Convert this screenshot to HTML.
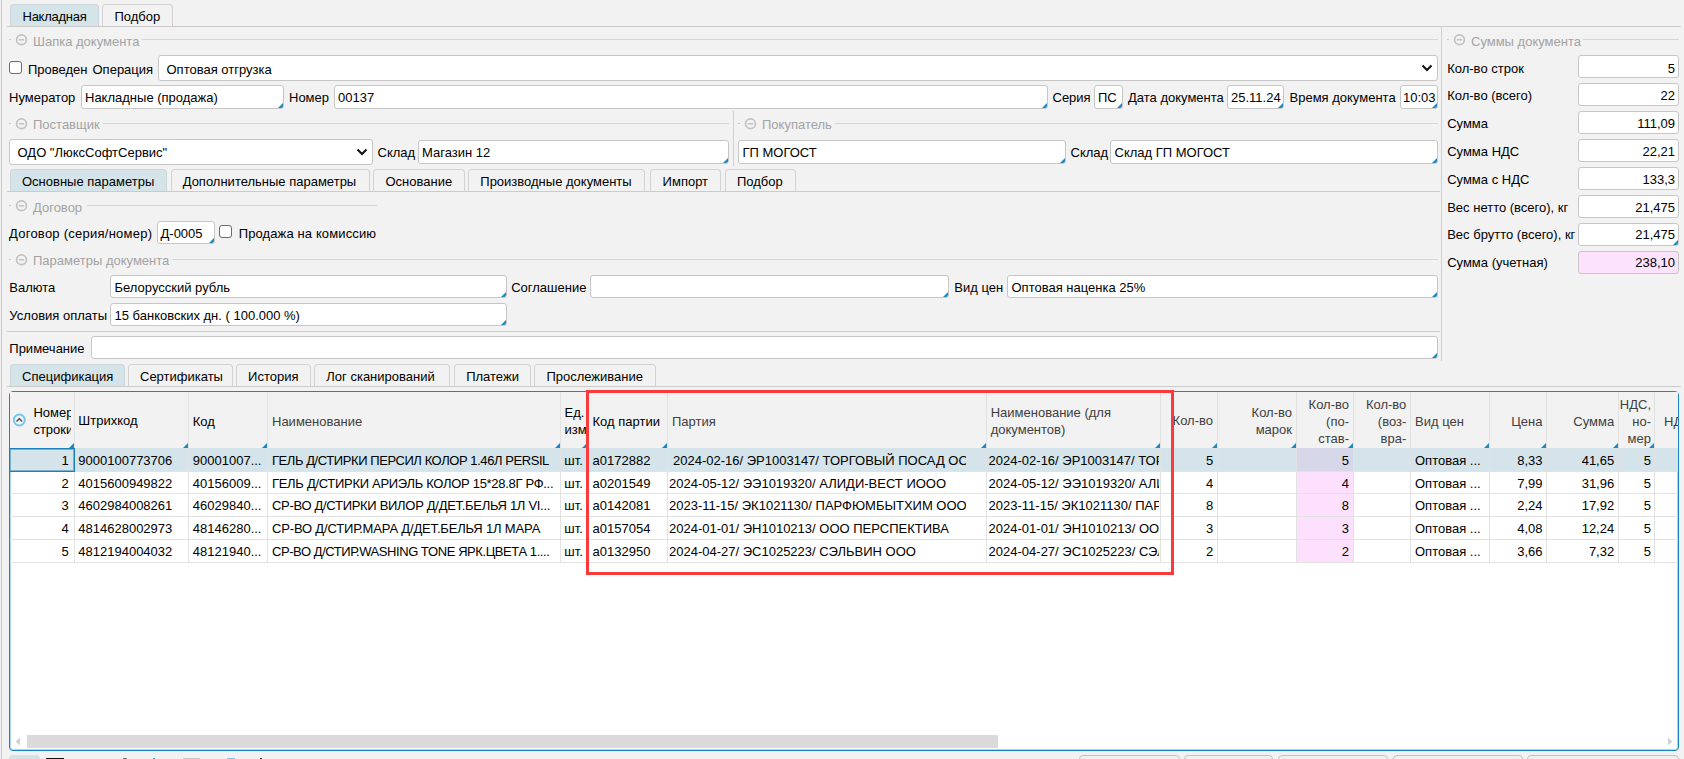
<!DOCTYPE html><html><head><meta charset="utf-8"><style>
html,body{margin:0;padding:0}
body{width:1684px;height:759px;overflow:hidden;background:#f2f2f2;position:relative;font-family:"Liberation Sans",sans-serif;font-size:13px;color:#000}
.t{position:absolute;white-space:nowrap;line-height:16px;font-size:13px}
.r{text-align:right}
.sec{color:#a3a3a3}
.ab{position:absolute}
.inp{position:absolute;box-sizing:border-box;background:#fff;border:1px solid #c6c6c6;border-radius:3px}
.cr{position:absolute;width:0;height:0;border-style:solid;border-width:0 0 5px 5px;border-color:transparent transparent #1e88c0 transparent}
.tab{position:absolute;box-sizing:border-box;background:#f2f2f2;border:1px solid #d2d2d2;border-bottom:none;border-radius:4px 4px 0 0}
.tab.act{background:#d4e4e9;border-color:#cdd6da}
.cb{position:absolute;width:13px;height:13px;box-sizing:border-box;border:1px solid #6a6a6a;border-radius:3px;background:#fff}
.hc{position:absolute;background:#f2f2f2;top:392px;height:56px}
.hdr{color:#404040}
.tri{position:absolute;width:0;height:0;border-style:solid;border-width:0 0 5px 5px;border-color:transparent transparent #1e88c0 transparent}
</style></head><body>

<div class="ab" style="left:1px;top:0px;width:1px;height:759px;background:#c8c8c8"></div>
<div class="tab act" style="left:10px;top:4px;width:89px;height:22px"></div>
<div class="t " style="left:22.5px;top:9px;letter-spacing:-0.25px">Накладная</div>
<div class="tab" style="left:102px;top:4px;width:71px;height:22px"></div>
<div class="t " style="left:114.5px;top:9px;">Подбор</div>
<div class="ab" style="left:7px;top:26px;width:1674px;height:1px;background:#cbcbcb"></div>
<div class="ab" style="left:9px;top:39px;width:2px;height:1px;background:#c8c8c8"></div>
<svg class="ab" style="left:15px;top:33px" width="13" height="13" viewBox="0 0 13 13"><circle cx="6.5" cy="6.8" r="4.9" fill="none" stroke="#c2c2c2" stroke-width="1.7"/><path d="M3.9 6.8 H9.1" stroke="#bdbdbd" stroke-width="1.4"/></svg>
<div class="t sec" style="left:33px;top:34px;">Шапка документа</div>
<div class="ab" style="left:142px;top:39px;width:1296px;height:1px;background:#d6d6d6"></div>
<div class="ab" style="left:1441px;top:27px;width:1px;height:334px;background:#d0d0d0"></div>
<div class="cb" style="left:9px;top:61px"></div>
<div class="t " style="left:28px;top:62px;">Проведен</div>
<div class="t " style="left:92.5px;top:62px;">Операция</div>
<div class="inp" style="left:158px;top:55px;width:1280px;height:26px;"></div>
<div class="t " style="left:166.5px;top:62px;">Оптовая отгрузка</div>
<svg class="ab" style="left:1421px;top:64px" width="12" height="8" viewBox="0 0 12 8"><path d="M1.5 1.5 L6 6 L10.5 1.5" fill="none" stroke="#111" stroke-width="2"/></svg>
<div class="t " style="left:9px;top:90px;">Нумератор</div>
<div class="inp" style="left:81px;top:85px;width:203px;height:24px;overflow:hidden;"><div class="cr" style="right:0;bottom:0"></div></div>
<div class="t " style="left:85px;top:90px;">Накладные (продажа)</div>
<div class="t " style="left:289px;top:90px;">Номер</div>
<div class="inp" style="left:334px;top:85px;width:714px;height:24px;overflow:hidden;"><div class="cr" style="right:0;bottom:0"></div></div>
<div class="t " style="left:338px;top:90px;">00137</div>
<div class="t " style="left:1052.5px;top:90px;">Серия</div>
<div class="inp" style="left:1094px;top:85px;width:29px;height:24px;overflow:hidden;"><div class="cr" style="right:0;bottom:0"></div></div>
<div class="t " style="left:1098px;top:90px;">ПС</div>
<div class="t " style="left:1128px;top:90px;">Дата документа</div>
<div class="inp" style="left:1227px;top:85px;width:57px;height:24px;overflow:hidden;"><div class="cr" style="right:0;bottom:0"></div></div>
<div class="t " style="left:1231px;top:90px;">25.11.24</div>
<div class="t " style="left:1289.5px;top:90px;">Время документа</div>
<div class="inp" style="left:1400px;top:85px;width:38px;height:24px;overflow:hidden;"><div class="cr" style="right:0;bottom:0"></div></div>
<div class="t " style="left:1403px;top:90px;">10:03</div>
<div class="ab" style="left:9px;top:123px;width:2px;height:1px;background:#c8c8c8"></div>
<svg class="ab" style="left:15px;top:117px" width="13" height="13" viewBox="0 0 13 13"><circle cx="6.5" cy="6.8" r="4.9" fill="none" stroke="#c2c2c2" stroke-width="1.7"/><path d="M3.9 6.8 H9.1" stroke="#bdbdbd" stroke-width="1.4"/></svg>
<div class="t sec" style="left:33px;top:117px;">Поставщик</div>
<div class="ab" style="left:103px;top:123px;width:626px;height:1px;background:#d6d6d6"></div>
<div class="ab" style="left:733px;top:111px;width:1px;height:55px;background:#d0d0d0"></div>
<div class="ab" style="left:738px;top:123px;width:2px;height:1px;background:#c8c8c8"></div>
<svg class="ab" style="left:744px;top:117px" width="13" height="13" viewBox="0 0 13 13"><circle cx="6.5" cy="6.8" r="4.9" fill="none" stroke="#c2c2c2" stroke-width="1.7"/><path d="M3.9 6.8 H9.1" stroke="#bdbdbd" stroke-width="1.4"/></svg>
<div class="t sec" style="left:762px;top:117px;">Покупатель</div>
<div class="ab" style="left:835px;top:123px;width:603px;height:1px;background:#d6d6d6"></div>
<div class="inp" style="left:9px;top:139px;width:364px;height:26px;"></div>
<div class="t " style="left:17.5px;top:145px;">ОДО &quot;ЛюксСофтСервис&quot;</div>
<svg class="ab" style="left:356px;top:148px" width="12" height="8" viewBox="0 0 12 8"><path d="M1.5 1.5 L6 6 L10.5 1.5" fill="none" stroke="#111" stroke-width="2"/></svg>
<div class="t " style="left:377.5px;top:145px;">Склад</div>
<div class="inp" style="left:418px;top:140px;width:311px;height:24px;overflow:hidden;"><div class="cr" style="right:0;bottom:0"></div></div>
<div class="t " style="left:422px;top:145px;">Магазин 12</div>
<div class="inp" style="left:738px;top:140px;width:328px;height:24px;overflow:hidden;"><div class="cr" style="right:0;bottom:0"></div></div>
<div class="t " style="left:742.5px;top:145px;">ГП МОГОСТ</div>
<div class="t " style="left:1070.5px;top:145px;">Склад</div>
<div class="inp" style="left:1110px;top:140px;width:328px;height:24px;overflow:hidden;"><div class="cr" style="right:0;bottom:0"></div></div>
<div class="t " style="left:1114.5px;top:145px;">Склад ГП МОГОСТ</div>
<div class="tab act" style="left:10px;top:169px;width:157px;height:22px"></div>
<div class="t " style="left:22px;top:174px;">Основные параметры</div>
<div class="tab" style="left:171px;top:169px;width:199px;height:22px"></div>
<div class="t " style="left:182.7px;top:174px;">Дополнительные параметры</div>
<div class="tab" style="left:373px;top:169px;width:92px;height:22px"></div>
<div class="t " style="left:385.5px;top:174px;">Основание</div>
<div class="tab" style="left:468px;top:169px;width:177px;height:22px"></div>
<div class="t " style="left:480.3px;top:174px;">Производные документы</div>
<div class="tab" style="left:650px;top:169px;width:71px;height:22px"></div>
<div class="t " style="left:662.6px;top:174px;">Импорт</div>
<div class="tab" style="left:725px;top:169px;width:71px;height:22px"></div>
<div class="t " style="left:737px;top:174px;">Подбор</div>
<div class="ab" style="left:7px;top:191px;width:1433px;height:1px;background:#cbcbcb"></div>
<div class="ab" style="left:9px;top:205px;width:2px;height:1px;background:#c8c8c8"></div>
<svg class="ab" style="left:15px;top:199px" width="13" height="13" viewBox="0 0 13 13"><circle cx="6.5" cy="6.8" r="4.9" fill="none" stroke="#c2c2c2" stroke-width="1.7"/><path d="M3.9 6.8 H9.1" stroke="#bdbdbd" stroke-width="1.4"/></svg>
<div class="t sec" style="left:33px;top:200px;">Договор</div>
<div class="ab" style="left:87px;top:205px;width:290px;height:1px;background:#d6d6d6"></div>
<div class="t " style="left:9px;top:226px;letter-spacing:0.25px">Договор (серия/номер)</div>
<div class="inp" style="left:157px;top:221px;width:58px;height:23px;overflow:hidden;"><div class="cr" style="right:0;bottom:0"></div></div>
<div class="t " style="left:160.5px;top:226px;">Д-0005</div>
<div class="cb" style="left:219px;top:225px"></div>
<div class="t " style="left:238.7px;top:226px;letter-spacing:0.12px">Продажа на комиссию</div>
<div class="ab" style="left:9px;top:259px;width:2px;height:1px;background:#c8c8c8"></div>
<svg class="ab" style="left:15px;top:253px" width="13" height="13" viewBox="0 0 13 13"><circle cx="6.5" cy="6.8" r="4.9" fill="none" stroke="#c2c2c2" stroke-width="1.7"/><path d="M3.9 6.8 H9.1" stroke="#bdbdbd" stroke-width="1.4"/></svg>
<div class="t sec" style="left:33px;top:253px;">Параметры документа</div>
<div class="ab" style="left:172px;top:259px;width:1266px;height:1px;background:#d6d6d6"></div>
<div class="t " style="left:9.3px;top:280px;">Валюта</div>
<div class="inp" style="left:110px;top:275px;width:397px;height:23px;overflow:hidden;"><div class="cr" style="right:0;bottom:0"></div></div>
<div class="t " style="left:114.5px;top:280px;">Белорусский рубль</div>
<div class="t " style="left:511.2px;top:280px;">Соглашение</div>
<div class="inp" style="left:590px;top:275px;width:359px;height:23px;overflow:hidden;"><div class="cr" style="right:0;bottom:0"></div></div>
<div class="t " style="left:954.3px;top:280px;">Вид цен</div>
<div class="inp" style="left:1007px;top:275px;width:431px;height:23px;overflow:hidden;"><div class="cr" style="right:0;bottom:0"></div></div>
<div class="t " style="left:1011.5px;top:280px;">Оптовая наценка 25%</div>
<div class="t " style="left:9.3px;top:308px;">Условия оплаты</div>
<div class="inp" style="left:110px;top:303px;width:397px;height:23px;overflow:hidden;"><div class="cr" style="right:0;bottom:0"></div></div>
<div class="t " style="left:114.5px;top:308px;">15 банковских дн. ( 100.000 %)</div>
<div class="ab" style="left:7px;top:331px;width:1433px;height:1px;background:#cbcbcb"></div>
<div class="t " style="left:9.3px;top:341px;">Примечание</div>
<div class="inp" style="left:91px;top:336px;width:1347px;height:23px;overflow:hidden;"><div class="cr" style="right:0;bottom:0"></div></div>
<div class="ab" style="left:1447px;top:39px;width:2px;height:1px;background:#c8c8c8"></div>
<svg class="ab" style="left:1453px;top:33px" width="13" height="13" viewBox="0 0 13 13"><circle cx="6.5" cy="6.8" r="4.9" fill="none" stroke="#c2c2c2" stroke-width="1.7"/><path d="M3.9 6.8 H9.1" stroke="#bdbdbd" stroke-width="1.4"/></svg>
<div class="t sec" style="left:1471px;top:34px;">Суммы документа</div>
<div class="ab" style="left:1583px;top:39px;width:96px;height:1px;background:#d6d6d6"></div>
<div class="t " style="left:1447.2px;top:61px;">Кол-во строк</div>
<div class="inp" style="left:1578px;top:55px;width:101px;height:23px;"></div>
<div class="t r " style="right:9px;top:61px;">5</div>
<div class="t " style="left:1447.2px;top:88px;">Кол-во (всего)</div>
<div class="inp" style="left:1578px;top:83px;width:101px;height:23px;"></div>
<div class="t r " style="right:9px;top:88px;">22</div>
<div class="t " style="left:1447.2px;top:116px;">Сумма</div>
<div class="inp" style="left:1578px;top:111px;width:101px;height:23px;"></div>
<div class="t r " style="right:9px;top:116px;">111,09</div>
<div class="t " style="left:1447.2px;top:144px;">Сумма НДС</div>
<div class="inp" style="left:1578px;top:139px;width:101px;height:23px;"></div>
<div class="t r " style="right:9px;top:144px;">22,21</div>
<div class="t " style="left:1447.2px;top:172px;">Сумма с НДС</div>
<div class="inp" style="left:1578px;top:167px;width:101px;height:23px;"></div>
<div class="t r " style="right:9px;top:172px;">133,3</div>
<div class="t " style="left:1447.2px;top:200px;">Вес нетто (всего), кг</div>
<div class="inp" style="left:1578px;top:195px;width:101px;height:23px;"></div>
<div class="t r " style="right:9px;top:200px;">21,475</div>
<div class="t " style="left:1447.2px;top:227px;">Вес брутто (всего), кг</div>
<div class="inp" style="left:1578px;top:223px;width:101px;height:23px;overflow:hidden;"><div class="cr" style="right:0;bottom:0"></div></div>
<div class="t r " style="right:9px;top:227px;">21,475</div>
<div class="t " style="left:1447.2px;top:255px;">Сумма (учетная)</div>
<div class="inp" style="left:1578px;top:251px;width:101px;height:23px;background:#fde2fd;"></div>
<div class="t r " style="right:9px;top:255px;">238,10</div>
<div class="tab act" style="left:10px;top:364px;width:115px;height:22px"></div>
<div class="t " style="left:22.1px;top:369px;">Спецификация</div>
<div class="tab" style="left:128px;top:364px;width:105px;height:22px"></div>
<div class="t " style="left:140px;top:369px;">Сертификаты</div>
<div class="tab" style="left:236px;top:364px;width:75px;height:22px"></div>
<div class="t " style="left:248.1px;top:369px;">История</div>
<div class="tab" style="left:314px;top:364px;width:136px;height:22px"></div>
<div class="t " style="left:326.3px;top:369px;">Лог сканирований</div>
<div class="tab" style="left:454px;top:364px;width:77px;height:22px"></div>
<div class="t " style="left:466.2px;top:369px;">Платежи</div>
<div class="tab" style="left:534px;top:364px;width:122px;height:22px"></div>
<div class="t " style="left:546.4px;top:369px;">Прослеживание</div>
<div class="ab" style="left:7px;top:386px;width:1674px;height:1px;background:#cbcbcb"></div>
<div class="ab" style="left:9px;top:391px;width:1670px;height:360px;box-sizing:border-box;border:1px solid #1787c0;border-radius:4px;background:#fff;box-shadow:inset 0 0 0 1px rgba(23,135,192,0.35)"></div>
<div class="ab" style="left:10px;top:392px;width:1668px;height:56px;background:#f2f2f2"></div>
<div class="ab" style="left:74px;top:392px;width:1px;height:170px;background:#e2e2e2"></div>
<div class="ab" style="left:188px;top:392px;width:1px;height:170px;background:#e2e2e2"></div>
<div class="ab" style="left:267px;top:392px;width:1px;height:170px;background:#e2e2e2"></div>
<div class="ab" style="left:560px;top:392px;width:1px;height:170px;background:#e2e2e2"></div>
<div class="ab" style="left:587px;top:392px;width:1px;height:170px;background:#e2e2e2"></div>
<div class="ab" style="left:667px;top:392px;width:1px;height:170px;background:#e2e2e2"></div>
<div class="ab" style="left:986px;top:392px;width:1px;height:170px;background:#e2e2e2"></div>
<div class="ab" style="left:1160px;top:392px;width:1px;height:170px;background:#e2e2e2"></div>
<div class="ab" style="left:1217px;top:392px;width:1px;height:170px;background:#e2e2e2"></div>
<div class="ab" style="left:1296px;top:392px;width:1px;height:170px;background:#e2e2e2"></div>
<div class="ab" style="left:1353px;top:392px;width:1px;height:170px;background:#e2e2e2"></div>
<div class="ab" style="left:1410px;top:392px;width:1px;height:170px;background:#e2e2e2"></div>
<div class="ab" style="left:1489px;top:392px;width:1px;height:170px;background:#e2e2e2"></div>
<div class="ab" style="left:1546px;top:392px;width:1px;height:170px;background:#e2e2e2"></div>
<div class="ab" style="left:1618px;top:392px;width:1px;height:170px;background:#e2e2e2"></div>
<div class="ab" style="left:1654px;top:392px;width:1px;height:170px;background:#e2e2e2"></div>
<div class="ab" style="left:10px;top:448px;width:1668px;height:1px;background:#f2f2f2"></div>
<div class="ab" style="left:10px;top:448px;width:1668px;height:23px;background:#d4e4ea"></div>
<div class="ab" style="left:1297px;top:448px;width:56px;height:23px;background:#d6d8ea"></div>
<div class="ab" style="left:1297px;top:471px;width:56px;height:22px;background:#fde0fd"></div>
<div class="ab" style="left:1297px;top:493px;width:56px;height:23px;background:#fde0fd"></div>
<div class="ab" style="left:1297px;top:516px;width:56px;height:23px;background:#fde0fd"></div>
<div class="ab" style="left:1297px;top:539px;width:56px;height:23px;background:#fde0fd"></div>
<div class="ab" style="left:74px;top:448px;width:1px;height:114px;background:#e2e2e2"></div>
<div class="ab" style="left:188px;top:448px;width:1px;height:114px;background:#e2e2e2"></div>
<div class="ab" style="left:267px;top:448px;width:1px;height:114px;background:#e2e2e2"></div>
<div class="ab" style="left:560px;top:448px;width:1px;height:114px;background:#e2e2e2"></div>
<div class="ab" style="left:587px;top:448px;width:1px;height:114px;background:#e2e2e2"></div>
<div class="ab" style="left:667px;top:448px;width:1px;height:114px;background:#e2e2e2"></div>
<div class="ab" style="left:986px;top:448px;width:1px;height:114px;background:#e2e2e2"></div>
<div class="ab" style="left:1160px;top:448px;width:1px;height:114px;background:#e2e2e2"></div>
<div class="ab" style="left:1217px;top:448px;width:1px;height:114px;background:#e2e2e2"></div>
<div class="ab" style="left:1296px;top:448px;width:1px;height:114px;background:#e2e2e2"></div>
<div class="ab" style="left:1353px;top:448px;width:1px;height:114px;background:#e2e2e2"></div>
<div class="ab" style="left:1410px;top:448px;width:1px;height:114px;background:#e2e2e2"></div>
<div class="ab" style="left:1489px;top:448px;width:1px;height:114px;background:#e2e2e2"></div>
<div class="ab" style="left:1546px;top:448px;width:1px;height:114px;background:#e2e2e2"></div>
<div class="ab" style="left:1618px;top:448px;width:1px;height:114px;background:#e2e2e2"></div>
<div class="ab" style="left:1654px;top:448px;width:1px;height:114px;background:#e2e2e2"></div>
<div class="ab" style="left:10px;top:471px;width:1668px;height:1px;background:#e2e2e2"></div>
<div class="ab" style="left:10px;top:493px;width:1668px;height:1px;background:#e2e2e2"></div>
<div class="ab" style="left:10px;top:516px;width:1668px;height:1px;background:#e2e2e2"></div>
<div class="ab" style="left:10px;top:539px;width:1668px;height:1px;background:#e2e2e2"></div>
<div class="ab" style="left:10px;top:562px;width:1668px;height:1px;background:#e2e2e2"></div>
<div class="ab" style="left:9px;top:448px;width:66px;height:24px;box-sizing:border-box;border:1px solid #1b7fb7;box-shadow:inset 0 0 0 1px rgba(27,127,183,0.5)"></div>
<div class="tri" style="left:69px;top:443px"></div>
<div class="tri" style="left:183px;top:443px"></div>
<div class="tri" style="left:262px;top:443px"></div>
<div class="tri" style="left:555px;top:443px"></div>
<div class="tri" style="left:582px;top:443px"></div>
<div class="tri" style="left:662px;top:443px"></div>
<div class="tri" style="left:981px;top:443px"></div>
<div class="tri" style="left:1155px;top:443px"></div>
<div class="tri" style="left:1212px;top:443px"></div>
<div class="tri" style="left:1291px;top:443px"></div>
<div class="tri" style="left:1348px;top:443px"></div>
<div class="tri" style="left:1484px;top:443px"></div>
<div class="tri" style="left:1541px;top:443px"></div>
<div class="tri" style="left:1613px;top:443px"></div>
<div class="tri" style="left:1649px;top:443px"></div>
<svg class="ab" style="left:12px;top:413px" width="15" height="15" viewBox="0 0 15 15"><circle cx="7.3" cy="7" r="5.5" fill="#eef4f7" stroke="#72c4ec" stroke-width="1.9"/><path d="M4.5 8.5 L7.3 5.7 L10.1 8.5" fill="none" stroke="#5a5a5a" stroke-width="1.6"/></svg>
<div class="ab" style="left:30px;top:392px;width:41px;height:171px;overflow:hidden">
<div class="t " style="left:3.3999999999999986px;top:13px;">Номер</div>
<div class="t " style="left:3.3999999999999986px;top:30px;">строки</div>
</div>
<div class="t " style="left:78.3px;top:413px;">Штрихкод</div>
<div class="t " style="left:192.8px;top:414px;">Код</div>
<div class="t hdr" style="left:272px;top:414px;">Наименование</div>
<div class="ab" style="left:561px;top:392px;width:25px;height:171px;overflow:hidden">
<div class="t " style="left:3.5px;top:13px;">Ед.</div>
<div class="t " style="left:3.5px;top:30px;">изм</div>
</div>
<div class="t " style="left:592.5px;top:414px;">Код партии</div>
<div class="t hdr" style="left:672px;top:414px;">Партия</div>
<div class="t hdr" style="left:990.7px;top:405px;">Наименование (для</div>
<div class="t hdr" style="left:990.7px;top:422px;">документов)</div>
<div class="t r hdr" style="right:471px;top:413px;">Кол-во</div>
<div class="t r hdr" style="right:392px;top:405px;">Кол-во</div>
<div class="t r hdr" style="right:392px;top:422px;">марок</div>
<div class="t r hdr" style="right:335px;top:397px;">Кол-во</div>
<div class="t r hdr" style="right:335px;top:414px;">(по-</div>
<div class="t r hdr" style="right:335px;top:431px;">став-</div>
<div class="t r hdr" style="right:277.70000000000005px;top:397px;">Кол-во</div>
<div class="t r hdr" style="right:277.70000000000005px;top:414px;">(воз-</div>
<div class="t r hdr" style="right:277.70000000000005px;top:431px;">вра-</div>
<div class="t hdr" style="left:1415px;top:414px;">Вид цен</div>
<div class="t r hdr" style="right:141.5px;top:414px;">Цена</div>
<div class="t r hdr" style="right:69.79999999999995px;top:414px;">Сумма</div>
<div class="t r hdr" style="right:33px;top:397px;">НДС,</div>
<div class="t r hdr" style="right:33px;top:414px;">но-</div>
<div class="t r hdr" style="right:33px;top:431px;">мер</div>
<div class="ab" style="left:1655px;top:392px;width:23px;height:171px;overflow:hidden">
<div class="t hdr" style="left:9px;top:22px;">НД</div>
</div>
<div class="t r " style="right:1615.2px;top:453px;">1</div>
<div class="t " style="left:78.3px;top:453px;">9000100773706</div>
<div class="t " style="left:192.8px;top:453px;">90001007...</div>
<div class="ab" style="left:268px;top:392px;width:291px;height:171px;overflow:hidden">
<div class="t " style="left:4px;top:61px;letter-spacing:-0.43px">ГЕЛЬ Д/СТИРКИ ПЕРСИЛ КОЛОР 1.46Л PERSIL</div>
</div>
<div class="t " style="left:564.3px;top:453px;">шт.</div>
<div class="t " style="left:592.6px;top:453px;">a0172882</div>
<div class="ab" style="left:668px;top:392px;width:298px;height:171px;overflow:hidden">
<div class="t " style="left:5px;top:61px;">2024-02-16/ ЭР1003147/ ТОРГОВЫЙ ПОСАД ООО</div>
</div>
<div class="ab" style="left:987px;top:392px;width:172px;height:171px;overflow:hidden">
<div class="t " style="left:1.6000000000000227px;top:61px;">2024-02-16/ ЭР1003147/ ТОРГОВЫЙ ПОСАД ООО</div>
</div>
<div class="t r " style="right:470.79999999999995px;top:453px;">5</div>
<div class="t r " style="right:335px;top:453px;">5</div>
<div class="t " style="left:1415px;top:453px;">Оптовая ...</div>
<div class="t r " style="right:141.5px;top:453px;">8,33</div>
<div class="t r " style="right:69.79999999999995px;top:453px;">41,65</div>
<div class="t r " style="right:33px;top:453px;">5</div>
<div class="t r " style="right:1615.2px;top:476px;">2</div>
<div class="t " style="left:78.3px;top:476px;">4015600949822</div>
<div class="t " style="left:192.8px;top:476px;">40156009...</div>
<div class="ab" style="left:268px;top:392px;width:291px;height:171px;overflow:hidden">
<div class="t " style="left:4px;top:84px;letter-spacing:-0.3px">ГЕЛЬ Д/СТИРКИ АРИЭЛЬ КОЛОР 15*28.8Г РФ...</div>
</div>
<div class="t " style="left:564.3px;top:476px;">шт.</div>
<div class="t " style="left:592.6px;top:476px;">a0201549</div>
<div class="ab" style="left:668px;top:392px;width:298px;height:171px;overflow:hidden">
<div class="t " style="left:1px;top:84px;">2024-05-12/ ЭЭ1019320/ АЛИДИ-ВЕСТ ИООО</div>
</div>
<div class="ab" style="left:987px;top:392px;width:172px;height:171px;overflow:hidden">
<div class="t " style="left:1.6000000000000227px;top:84px;">2024-05-12/ ЭЭ1019320/ АЛИДИ-ВЕСТ ИООО</div>
</div>
<div class="t r " style="right:470.79999999999995px;top:476px;">4</div>
<div class="t r " style="right:335px;top:476px;">4</div>
<div class="t " style="left:1415px;top:476px;">Оптовая ...</div>
<div class="t r " style="right:141.5px;top:476px;">7,99</div>
<div class="t r " style="right:69.79999999999995px;top:476px;">31,96</div>
<div class="t r " style="right:33px;top:476px;">5</div>
<div class="t r " style="right:1615.2px;top:498px;">3</div>
<div class="t " style="left:78.3px;top:498px;">4602984008261</div>
<div class="t " style="left:192.8px;top:498px;">46029840...</div>
<div class="ab" style="left:268px;top:392px;width:291px;height:171px;overflow:hidden">
<div class="t " style="left:4px;top:106px;letter-spacing:-0.3px">СР-ВО Д/СТИРКИ ВИЛОР Д/ДЕТ.БЕЛЬЯ 1Л VI...</div>
</div>
<div class="t " style="left:564.3px;top:498px;">шт.</div>
<div class="t " style="left:592.6px;top:498px;">a0142081</div>
<div class="ab" style="left:668px;top:392px;width:298px;height:171px;overflow:hidden">
<div class="t " style="left:1px;top:106px;">2023-11-15/ ЭК1021130/ ПАРФЮМБЫТХИМ ООО</div>
</div>
<div class="ab" style="left:987px;top:392px;width:172px;height:171px;overflow:hidden">
<div class="t " style="left:1.6000000000000227px;top:106px;">2023-11-15/ ЭК1021130/ ПАРФЮМБЫТХИМ ООО</div>
</div>
<div class="t r " style="right:470.79999999999995px;top:498px;">8</div>
<div class="t r " style="right:335px;top:498px;">8</div>
<div class="t " style="left:1415px;top:498px;">Оптовая ...</div>
<div class="t r " style="right:141.5px;top:498px;">2,24</div>
<div class="t r " style="right:69.79999999999995px;top:498px;">17,92</div>
<div class="t r " style="right:33px;top:498px;">5</div>
<div class="t r " style="right:1615.2px;top:521px;">4</div>
<div class="t " style="left:78.3px;top:521px;">4814628002973</div>
<div class="t " style="left:192.8px;top:521px;">48146280...</div>
<div class="ab" style="left:268px;top:392px;width:291px;height:171px;overflow:hidden">
<div class="t " style="left:4px;top:129px;letter-spacing:-0.17px">СР-ВО Д/СТИР.МАРА Д/ДЕТ.БЕЛЬЯ 1Л МАРА</div>
</div>
<div class="t " style="left:564.3px;top:521px;">шт.</div>
<div class="t " style="left:592.6px;top:521px;">a0157054</div>
<div class="ab" style="left:668px;top:392px;width:298px;height:171px;overflow:hidden">
<div class="t " style="left:1px;top:129px;">2024-01-01/ ЭН1010213/ ООО ПЕРСПЕКТИВА</div>
</div>
<div class="ab" style="left:987px;top:392px;width:172px;height:171px;overflow:hidden">
<div class="t " style="left:1.6000000000000227px;top:129px;">2024-01-01/ ЭН1010213/ ООО ПЕРСПЕКТИВА</div>
</div>
<div class="t r " style="right:470.79999999999995px;top:521px;">3</div>
<div class="t r " style="right:335px;top:521px;">3</div>
<div class="t " style="left:1415px;top:521px;">Оптовая ...</div>
<div class="t r " style="right:141.5px;top:521px;">4,08</div>
<div class="t r " style="right:69.79999999999995px;top:521px;">12,24</div>
<div class="t r " style="right:33px;top:521px;">5</div>
<div class="t r " style="right:1615.2px;top:544px;">5</div>
<div class="t " style="left:78.3px;top:544px;">4812194004032</div>
<div class="t " style="left:192.8px;top:544px;">48121940...</div>
<div class="ab" style="left:268px;top:392px;width:291px;height:171px;overflow:hidden">
<div class="t " style="left:4px;top:152px;letter-spacing:-0.43px">СР-ВО Д/СТИР.WASHING TONE ЯРК.ЦВЕТА 1....</div>
</div>
<div class="t " style="left:564.3px;top:544px;">шт.</div>
<div class="t " style="left:592.6px;top:544px;">a0132950</div>
<div class="ab" style="left:668px;top:392px;width:298px;height:171px;overflow:hidden">
<div class="t " style="left:1px;top:152px;">2024-04-27/ ЭС1025223/ СЭЛЬВИН ООО</div>
</div>
<div class="ab" style="left:987px;top:392px;width:172px;height:171px;overflow:hidden">
<div class="t " style="left:1.6000000000000227px;top:152px;">2024-04-27/ ЭС1025223/ СЭЛЬВИН ООО</div>
</div>
<div class="t r " style="right:470.79999999999995px;top:544px;">2</div>
<div class="t r " style="right:335px;top:544px;">2</div>
<div class="t " style="left:1415px;top:544px;">Оптовая ...</div>
<div class="t r " style="right:141.5px;top:544px;">3,66</div>
<div class="t r " style="right:69.79999999999995px;top:544px;">7,32</div>
<div class="t r " style="right:33px;top:544px;">5</div>
<svg class="ab" style="left:15px;top:737px" width="6" height="9" viewBox="0 0 6 9"><path d="M5 0.5 L0.8 4.5 L5 8.5 Z" fill="#d0d0d0"/></svg>
<div class="ab" style="left:27px;top:735px;width:971px;height:13px;background:#dadada"></div>
<svg class="ab" style="left:1667px;top:737px" width="6" height="9" viewBox="0 0 6 9"><path d="M1 0.5 L5.2 4.5 L1 8.5 Z" fill="#d0d0d0"/></svg>
<div class="ab" style="left:586px;top:390px;width:588px;height:185px;box-sizing:border-box;border:3px solid #fb3b3b"></div>
<div class="ab" style="left:1079px;top:755px;width:101px;height:12px;box-sizing:border-box;border:1px solid #c2c2c2;border-radius:4px;background:#f0f0f0"></div>
<div class="ab" style="left:1184px;top:755px;width:89px;height:12px;box-sizing:border-box;border:1px solid #c2c2c2;border-radius:4px;background:#f0f0f0"></div>
<div class="ab" style="left:1278px;top:755px;width:110px;height:12px;box-sizing:border-box;border:1px solid #c2c2c2;border-radius:4px;background:#f0f0f0"></div>
<div class="ab" style="left:1393px;top:755px;width:130px;height:12px;box-sizing:border-box;border:1px solid #c2c2c2;border-radius:4px;background:#f0f0f0"></div>
<div class="ab" style="left:1527px;top:755px;width:152px;height:12px;box-sizing:border-box;border:1px solid #c2c2c2;border-radius:4px;background:#f0f0f0"></div>
<div class="ab" style="left:9px;top:755px;width:31px;height:10px;border-radius:4px;background:#d3e3e8"></div>
<div class="ab" style="left:46px;top:758px;width:18px;height:2px;background:#111"></div>
<div class="ab" style="left:123px;top:758px;width:4px;height:2px;background:#777"></div>
<div class="ab" style="left:153px;top:758px;width:2px;height:2px;background:#3aa0d8"></div>
<div class="ab" style="left:183px;top:758px;width:17px;height:2px;background:#c8c8c8"></div>
<div class="ab" style="left:227px;top:758px;width:8px;height:2px;background:#7cc8ee"></div>
<div class="ab" style="left:260px;top:758px;width:2px;height:2px;background:#333"></div>
</body></html>
